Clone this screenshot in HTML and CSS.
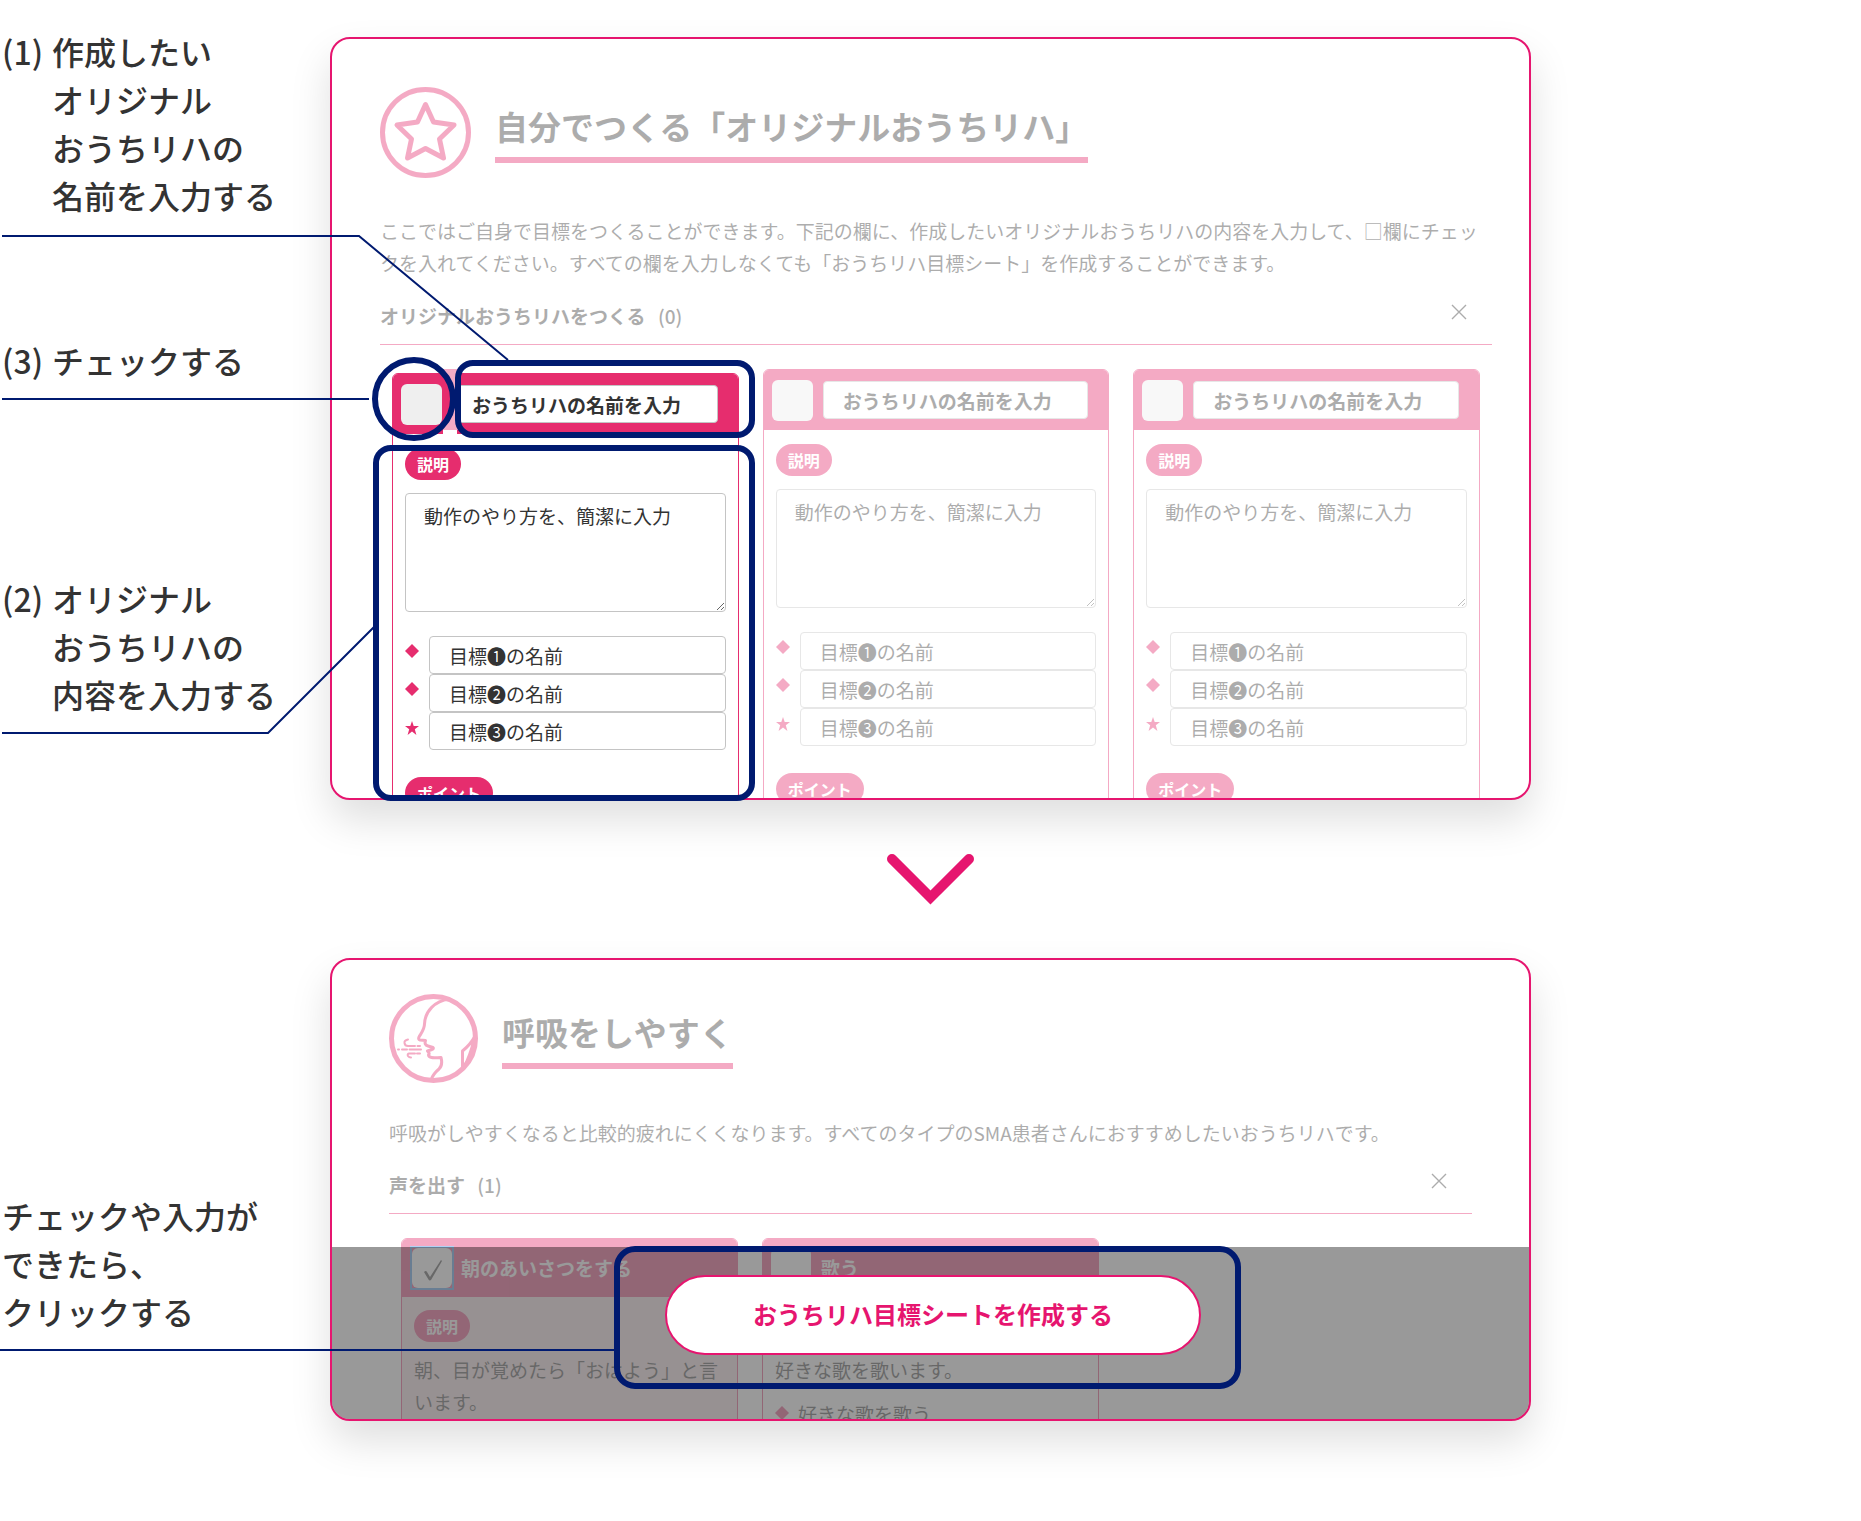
FILE: index.html
```html
<!DOCTYPE html>
<html lang="ja">
<head>
  <meta charset="UTF-8">
  <meta name="viewport" content="width=device-width, initial-scale=1">
  <title>オリジナルおうちリハの作り方</title>
  <link rel="stylesheet" href="styles.css">
</head>
<body>

  <main class="guide">

    <!-- 入力画面 -->
    <section class="step">
      <ol class="labels">
        <li class="label label-name"><span class="label-num">(1)</span><span>作成したい<br>オリジナル<br>おうちリハの<br>名前を入力する</span></li>
        <li class="label label-check"><span class="label-num">(3)</span><span>チェックする</span></li>
        <li class="label label-body"><span class="label-num">(2)</span><span>オリジナル<br>おうちリハの<br>内容を入力する</span></li>
      </ol>

      <div class="screen screen-original">
        <header class="screen-head faded">
          <svg class="icon-star" viewBox="0 0 91 91" aria-hidden="true">
            <circle cx="45.5" cy="45.5" r="43"/>
            <path d="M45.5 17.500 L53.5 35 L74 38 L59.500 52 L63.500 71 L45.5 61.5 L27.500 71 L31.500 52 L17 38 L37.500 35 Z"/>
          </svg>
          <h2>自分でつくる「オリジナルおうちリハ」</h2>
        </header>
        <p class="lead faded">ここではご自身で目標をつくることができます。下記の欄に、作成したいオリジナルおうちリハの内容を入力して、□欄にチェックを入れてください。すべての欄を入力しなくても「おうちリハ目標シート」を作成することができます。</p>
        <div class="accordion-head faded">
          <h3>オリジナルおうちリハをつくる <span class="count">(0)</span></h3>
          <button type="button" class="btn-close" aria-label="閉じる">
            <svg viewBox="0 0 16 16" aria-hidden="true"><path d="M1 1 L15 15 M15 1 L1 15"/></svg>
          </button>
        </div>

        <div class="cards">
          <article class="card card-active">
            <div class="card-head">
              <input type="checkbox" class="check" aria-label="1つ目を選択">
              <input type="text" class="input-name" aria-label="おうちリハの名前" value="おうちリハの名前を入力">
            </div>
            <div class="card-body">
              <label class="badge" for="desc1">説明</label>
              <textarea id="desc1">動作のやり方を、簡潔に入力</textarea>
              <ul class="goals">
                <li><svg class="mark" viewBox="0 0 14 14" aria-hidden="true"><path d="M7 0 L14 7 L7 14 L0 7 Z"/></svg><input type="text" aria-label="目標1" value="目標❶の名前"></li>
                <li><svg class="mark" viewBox="0 0 14 14" aria-hidden="true"><path d="M7 0 L14 7 L7 14 L0 7 Z"/></svg><input type="text" aria-label="目標2" value="目標❷の名前"></li>
                <li><svg class="mark mark-star" viewBox="0 0 14 14" aria-hidden="true"><path d="M7 0 L8.7 5 H14 L9.8 8.3 L11.4 14 L7 10.6 L2.6 14 L4.2 8.3 L0 5 H5.3 Z"/></svg><input type="text" aria-label="目標3" value="目標❸の名前"></li>
              </ul>
              <span class="badge">ポイント</span>
            </div>
          </article>

          <article class="card faded">
            <div class="card-head">
              <input type="checkbox" class="check" aria-label="2つ目を選択">
              <input type="text" class="input-name" aria-label="おうちリハの名前" value="おうちリハの名前を入力">
            </div>
            <div class="card-body">
              <label class="badge" for="desc2">説明</label>
              <textarea id="desc2">動作のやり方を、簡潔に入力</textarea>
              <ul class="goals">
                <li><svg class="mark" viewBox="0 0 14 14" aria-hidden="true"><path d="M7 0 L14 7 L7 14 L0 7 Z"/></svg><input type="text" aria-label="目標1" value="目標❶の名前"></li>
                <li><svg class="mark" viewBox="0 0 14 14" aria-hidden="true"><path d="M7 0 L14 7 L7 14 L0 7 Z"/></svg><input type="text" aria-label="目標2" value="目標❷の名前"></li>
                <li><svg class="mark mark-star" viewBox="0 0 14 14" aria-hidden="true"><path d="M7 0 L8.7 5 H14 L9.8 8.3 L11.4 14 L7 10.6 L2.6 14 L4.2 8.3 L0 5 H5.3 Z"/></svg><input type="text" aria-label="目標3" value="目標❸の名前"></li>
              </ul>
              <span class="badge">ポイント</span>
            </div>
          </article>

          <article class="card faded">
            <div class="card-head">
              <input type="checkbox" class="check" aria-label="3つ目を選択">
              <input type="text" class="input-name" aria-label="おうちリハの名前" value="おうちリハの名前を入力">
            </div>
            <div class="card-body">
              <label class="badge" for="desc3">説明</label>
              <textarea id="desc3">動作のやり方を、簡潔に入力</textarea>
              <ul class="goals">
                <li><svg class="mark" viewBox="0 0 14 14" aria-hidden="true"><path d="M7 0 L14 7 L7 14 L0 7 Z"/></svg><input type="text" aria-label="目標1" value="目標❶の名前"></li>
                <li><svg class="mark" viewBox="0 0 14 14" aria-hidden="true"><path d="M7 0 L14 7 L7 14 L0 7 Z"/></svg><input type="text" aria-label="目標2" value="目標❷の名前"></li>
                <li><svg class="mark mark-star" viewBox="0 0 14 14" aria-hidden="true"><path d="M7 0 L8.7 5 H14 L9.8 8.3 L11.4 14 L7 10.6 L2.6 14 L4.2 8.3 L0 5 H5.3 Z"/></svg><input type="text" aria-label="目標3" value="目標❸の名前"></li>
              </ul>
              <span class="badge">ポイント</span>
            </div>
          </article>
        </div>
      </div>
    </section>

    <div class="arrow">
      <svg viewBox="0 0 87 51" aria-hidden="true"><path d="M5 5 L43.5 43.5 L82 5"/></svg>
    </div>

    <!-- 作成ボタン画面 -->
    <section class="step">
      <p class="label label-click">チェックや入力が<br>できたら、<br>クリックする</p>

      <div class="screen screen-breath">
        <header class="screen-head faded">
          <svg class="icon-face" viewBox="0 0 89 89" aria-hidden="true">
            <circle cx="44.5" cy="44.5" r="42"/>
            <path class="face-line" d="M60 5 C46 7 36 17 35.500 30 C35.500 35 33 38 30 43 Q29 45.500 31 46 L36.500 46.500 Q35 51 39 52 L44 53.500 Q45 54.500 43 55.500 L38.500 57 Q41 59 39.500 61 C40 64 43 64 52 63.500 Q54 71 50 75 Q44 80 42 86"/>
            <path class="face-line" d="M86 42 Q82 50 73.500 57 V76 M85 46 Q81 62 75 73"/>
            <path class="wind-line" d="M19 45.500 Q15 46.500 15.500 49 Q16 52 19 52 H26 M28.500 52 H31 M9 55.500 H10 M13 55.500 H18 M20.500 55.500 H32 M31 59.500 H28 M26 59.500 H20 Q18 60 19 62 Q20 63.500 22 63.500"/>
          </svg>
          <h2>呼吸をしやすく</h2>
        </header>
        <p class="lead faded">呼吸がしやすくなると比較的疲れにくくなります。すべてのタイプのSMA患者さんにおすすめしたいおうちリハです。</p>
        <div class="accordion-head faded">
          <h3>声を出す <span class="count">(1)</span></h3>
          <button type="button" class="btn-close" aria-label="閉じる">
            <svg viewBox="0 0 16 16" aria-hidden="true"><path d="M1 1 L15 15 M15 1 L1 15"/></svg>
          </button>
        </div>

        <div class="cards">
          <article class="card card-checked faded">
            <div class="card-head">
              <span class="check-wrap">
                <input type="checkbox" class="check" id="greet" checked>
                <svg viewBox="0 0 20 22" aria-hidden="true"><path d="M1 13 Q3 11 4 13 L7 18 L18 1 L19 2 L8 21 Q6.500 22 5.500 20.500 Z"/></svg>
              </span>
              <label for="greet">朝のあいさつをする</label>
            </div>
            <div class="card-body">
              <span class="badge">説明</span>
              <p>朝、目が覚めたら「おはよう」と言います。</p>
            </div>
          </article>

          <article class="card faded">
            <div class="card-head">
              <input type="checkbox" class="check" id="sing">
              <label for="sing">歌う</label>
            </div>
            <div class="card-body card-body-plain">
              <p>好きな歌を歌います。</p>
              <p class="goal-text"><svg class="mark" viewBox="0 0 14 14" aria-hidden="true"><path d="M7 0 L14 7 L7 14 L0 7 Z"/></svg>好きな歌を歌う</p>
            </div>
          </article>
        </div>

        <div class="create-bar">
          <button type="button" class="btn-create">おうちリハ目標シートを作成する</button>
        </div>
      </div>
    </section>

    <!-- 引き出し線と囲み -->
    <svg class="callouts" width="1300" height="1440" viewBox="0 0 1300 1440" aria-hidden="true">
      <path class="gap-white" d="M443 425 V436 H457 V430 Z"/>
      <path class="gap-pink" d="M443 369 H458 V430 H443 V425 A39 39 0 0 0 443 373 Z"/>
      <polyline points="2,236 359,236 508,360"/>
      <polyline points="2,399 369,399"/>
      <polyline points="2,733 268,733 374,627"/>
      <polyline points="0,1350 615,1350"/>
      <circle class="frame" cx="414" cy="399" r="39"/>
      <rect class="frame" x="458" y="363" width="294" height="72" rx="15"/>
      <rect class="frame" x="376" y="448" width="376" height="350" rx="15"/>
      <rect class="frame" x="617" y="1249" width="621" height="137" rx="18"/>
    </svg>

  </main>

</body>
</html>
```

FILE: styles.css
```css
:root {
  --color-borde: #e6156f;
  --color-pink: #e62d6e;
  --color-navy: #001a70;
  --color-text: #333;
}

* {
  box-sizing: border-box;
}

body {
  margin: 0;
  background: #fff;
  color: var(--color-text);
  font-family: "Noto Sans CJK JP", "Noto Sans", sans-serif;
  font-size: 19px;
  line-height: 32px;
}

h2, h3, p, ul, ol {
  margin: 0;
  padding: 0;
}

ul, ol {
  list-style: none;
}

input, textarea, button {
  font-family: inherit;
  font-size: inherit;
  color: inherit;
  margin: 0;
}

.guide {
  position: relative;
  padding: 37px 0 100px;
}

.step {
  display: grid;
  grid-template-columns: 330px minmax(0, 1fr) 330px;
  align-items: start;
}

/* 左側の説明 */
.labels {
  margin-top: -10px;
}

.label {
  display: flex;
  padding-left: 2px;
  font-size: 32px;
  font-weight: 500;
  line-height: 48px;
}

.label-num {
  width: 50px;
}

.label-check {
  margin-top: 117px;
}

.label-body {
  margin-top: 190px;
}

.label-click {
  display: block;
  margin-top: 233px;
}

/* 画面の枠 */
.screen {
  position: relative;
  overflow: hidden;
  background: #fff;
  border: 2px solid var(--color-borde);
  border-radius: 20px;
  box-shadow: 0 20px 40px rgba(0, 0, 0, 0.13);
}

.screen-original {
  height: 763px;
  padding: 48px 37px 0 48px;
}

.screen-breath {
  height: 463px;
  padding: 34px 57px 0;
}

.faded {
  opacity: 0.4;
}

.screen-head {
  display: flex;
  align-items: center;
  gap: 24px;
}

.screen-head svg {
  fill: none;
  stroke: var(--color-pink);
  stroke-width: 5;
  stroke-linejoin: round;
}

.icon-star {
  width: 91px;
  height: 91px;
}

.icon-face {
  width: 89px;
  height: 89px;
}

.screen-head .face-line {
  stroke-width: 3;
}

.screen-head .wind-line {
  stroke-width: 2;
  stroke-linecap: round;
}

h2 {
  padding-bottom: 7px;
  border-bottom: 6px solid var(--color-pink);
  font-size: 33px;
  font-weight: 700;
  line-height: 48px;
}

.lead {
  margin-top: 37px;
}

.accordion-head {
  display: flex;
  align-items: center;
  justify-content: space-between;
  height: 66px;
  padding-right: 25px;
  border-bottom: 1px solid var(--color-pink);
}

h3 {
  padding-top: 8px;
  font-size: 19px;
  font-weight: 700;
}

.count {
  margin-left: 8px;
  font-weight: 500;
}

.btn-close {
  display: flex;
  padding: 0;
  background: none;
  border: none;
  cursor: pointer;
}

.btn-close svg {
  width: 16px;
  height: 16px;
  stroke: var(--color-text);
  stroke-width: 1.4;
}

/* カード */
.cards {
  display: grid;
  grid-template-columns: repeat(3, minmax(0, 1fr));
  align-items: start;
  gap: 24px;
  padding: 24px 12px 0;
}

.card {
  border: 1px solid var(--color-pink);
  border-radius: 6px 6px 0 0;
  overflow: hidden;
}

.card-active {
  margin-top: 4px;
}

.card-head {
  display: flex;
  align-items: center;
  gap: 10px;
  height: 60px;
  padding: 0 20px 0 8px;
  background: var(--color-pink);
  color: #fff;
  font-weight: 700;
}

.check {
  appearance: none;
  flex: none;
  width: 41px;
  height: 41px;
  background: #efefef;
  border-radius: 6px;
}

input[type="text"], textarea {
  width: 100%;
  min-width: 0;
  background: #fff;
  border: 1px solid #c4c4c4;
  border-radius: 4px;
  color: var(--color-text);
}

input[type="text"] {
  height: 38px;
  padding: 0 19px;
}

.input-name {
  font-weight: 700;
}

.card-body {
  padding: 14px 12px 30px;
}

.badge {
  display: table;
  padding: 0 12px;
  background: var(--color-pink);
  border-radius: 16px;
  color: #fff;
  font-size: 16px;
  font-weight: 700;
}

textarea {
  display: block;
  height: 119px;
  margin: 13px 0 24px;
  padding: 8px 18px;
  line-height: 28px;
  resize: vertical;
}

.goals {
  margin-bottom: 27px;
}

.goals li {
  display: flex;
  gap: 10px;
}

.mark {
  flex: none;
  width: 14px;
  height: 14px;
  margin-top: 8px;
  fill: var(--color-pink);
}

.mark-star {
  margin-top: 9px;
}

/* 呼吸の画面は全体に少し詰まっている */
.screen-breath .lead {
  margin-top: 34px;
}

.screen-breath .accordion-head {
  height: 65px;
}

.screen-breath .card-head {
  height: 58px;
}

.screen-breath .card-body {
  padding-top: 13px;
}

.screen-breath .card-body-plain {
  padding-top: 57px;
}

.screen-breath .badge {
  margin-bottom: 12px;
}

.screen-breath .check {
  width: 40px;
  height: 40px;
  background: #fff;
}

.card-checked .card-body {
  background: #f8dfe3;
}

.check-wrap {
  position: relative;
  display: flex;
  margin-right: -3px;
  border: 2px solid #3a8ee6;
}

.check-wrap svg {
  position: absolute;
  left: 11px;
  top: 11px;
  width: 20px;
  height: 22px;
  fill: var(--color-text);
}

.goal-text {
  display: flex;
  gap: 9px;
  margin-top: 12px;
}

/* 下矢印 */
.arrow {
  display: flex;
  align-items: center;
  justify-content: center;
  height: 158px;
}

.arrow svg {
  width: 87px;
  height: 51px;
  fill: none;
  stroke: var(--color-borde);
  stroke-width: 10;
  stroke-linecap: round;
  overflow: visible;
}

/* 作成ボタンのバー */
.create-bar {
  position: absolute;
  left: 0;
  right: 0;
  bottom: 0;
  display: flex;
  justify-content: center;
  height: 172px;
  padding: 28px 0 0 5px;
  background: rgba(0, 0, 0, 0.4);
}

.btn-create {
  width: 45%;
  height: 80px;
  padding-bottom: 4px;
  background: #fff;
  border: 2px solid var(--color-borde);
  border-radius: 40px;
  color: var(--color-borde);
  font-size: 24px;
  font-weight: 700;
  cursor: pointer;
}

/* 引き出し線 */
.callouts {
  position: absolute;
  left: 0;
  top: 0;
  fill: none;
  stroke: var(--color-navy);
  stroke-width: 2;
  pointer-events: none;
}

.callouts .frame {
  stroke-width: 6;
}

.callouts .gap-pink {
  fill: #f5abc5;
  stroke: none;
}

.callouts .gap-white {
  fill: #fff;
  stroke: none;
}
```
